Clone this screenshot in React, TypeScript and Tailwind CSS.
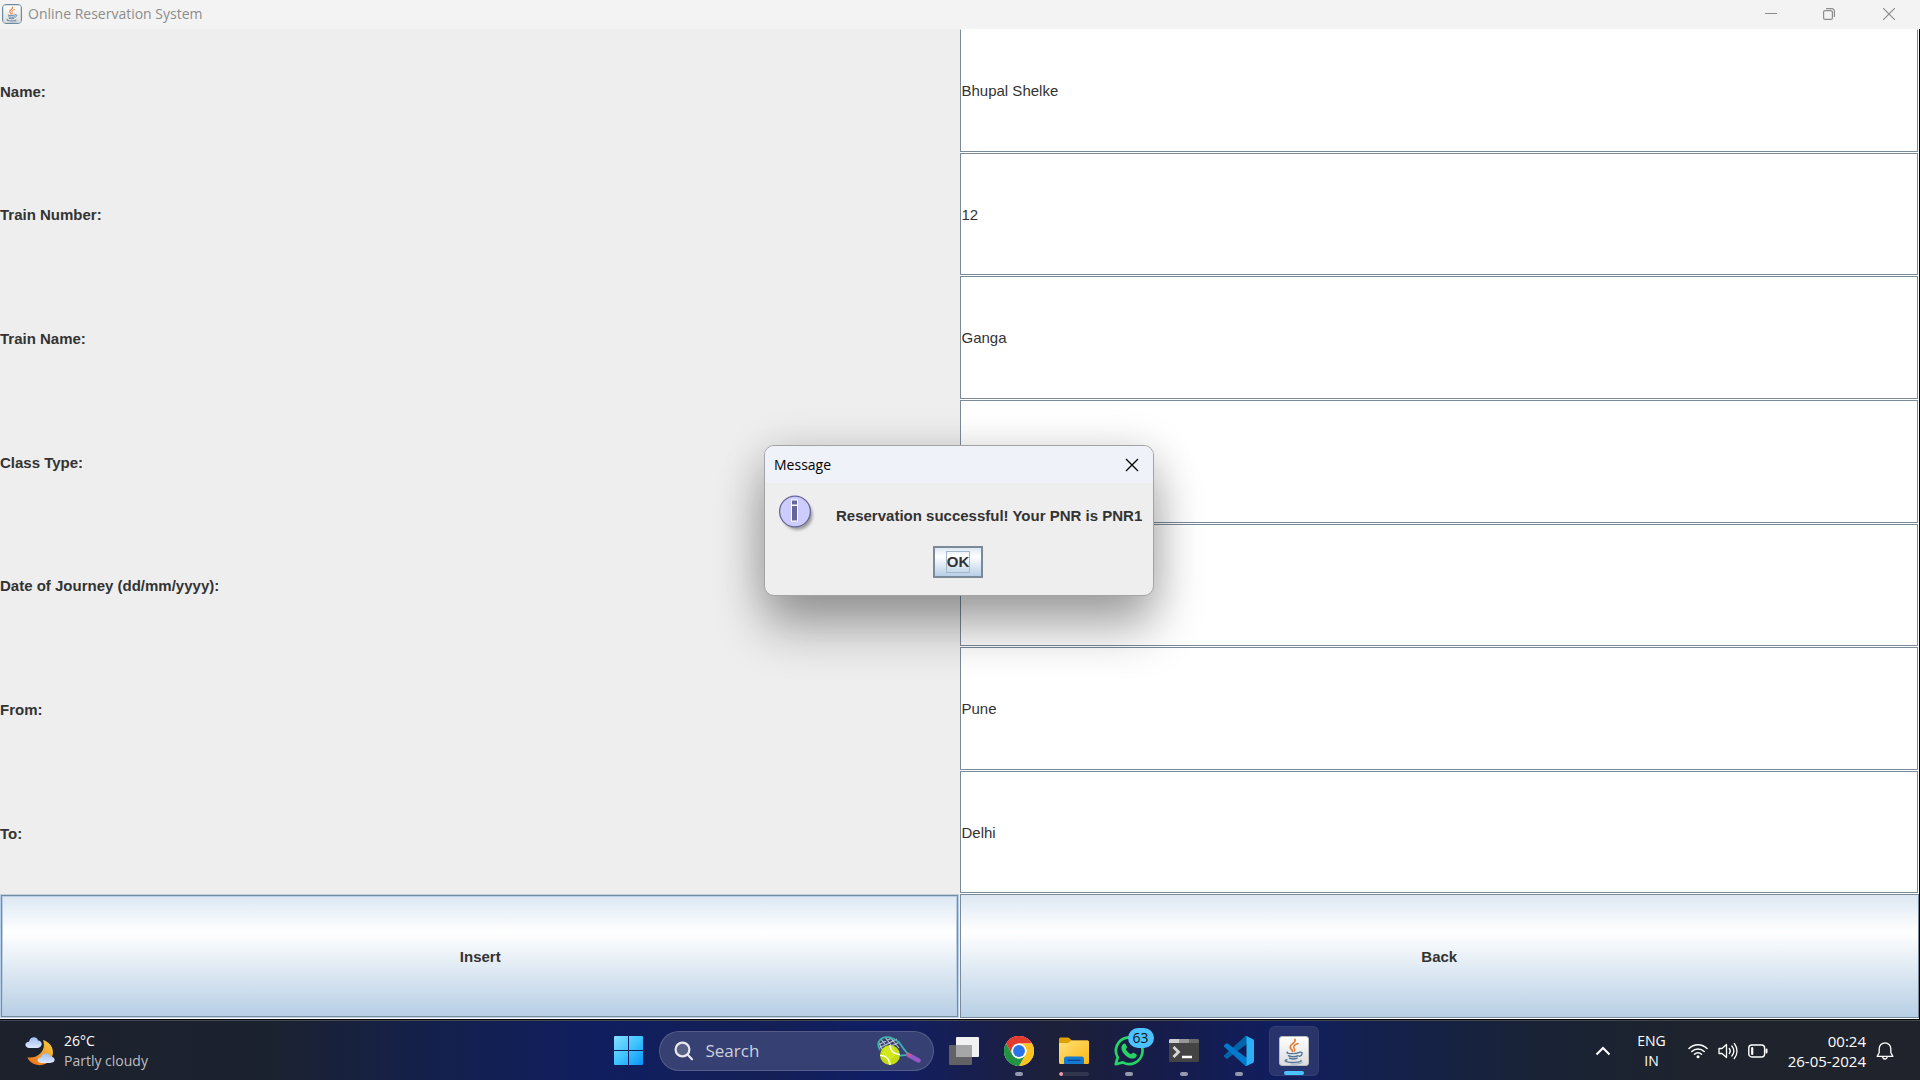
import type { ReactNode } from "react";

const rows = [
  { id: "name", label: "Name:", value: "Bhupal Shelke" },
  { id: "train-number", label: "Train Number:", value: "12" },
  { id: "train-name", label: "Train Name:", value: "Ganga" },
  { id: "class-type", label: "Class Type:", value: "" },
  { id: "journey-date", label: "Date of Journey (dd/mm/yyyy):", value: "" },
  { id: "from", label: "From:", value: "Pune" },
  { id: "to", label: "To:", value: "Delhi" },
];

function JavaIcon({ className }: { className: string }) {
  return (
    <svg viewBox="0 0 30 30" className={className} aria-hidden="true">
      <defs>
        <linearGradient id="java-bg" x1="0" y1="0" x2="0" y2="1">
          <stop offset="0" stopColor="#ffffff" />
          <stop offset="1" stopColor="#dcdcdc" />
        </linearGradient>
      </defs>
      <rect x="0.5" y="0.5" width="29" height="29" rx="2.5" fill="url(#java-bg)" stroke="#b9bcc0" />
      <g fill="none" strokeLinecap="round">
        <path d="M16 3.500c1.600 3-4.800 4.200-4.800 7.400 0 1.900 2 2.600 2.400 4.600" stroke="#e8762d" strokeWidth="1.700" />
        <path d="M19 7.500c-3 1-4.600 2.200-4.200 3.900.3 1.200 1.500 1.700.6 3.400" stroke="#e8762d" strokeWidth="1.400" />
        <path d="M8.500 16.200c-2 1 2 1.500 5.500 1.400 2.500 0 5-.4 6-.9" stroke="#56789a" strokeWidth="1.400" />
        <path d="M9.500 19.800c2.500 1 7 .9 9.500 0M10.500 22.300c2.200.8 5.400.8 7.600 0" stroke="#56789a" strokeWidth="1.500" />
        <path d="M20.500 16.300c3.800-.9 3.600 2.600-.3 4" stroke="#56789a" strokeWidth="1.400" />
        <path d="M8 23.800c-6 1.500 3 3 8 2.600 4-.3 7-1 6-2" stroke="#56789a" strokeWidth="1.400" />
        <path d="M12 28c4 .4 9 0 11.500-1.500" stroke="#8ea6bd" strokeWidth="0.900" />
      </g>
    </svg>
  );
}

function TitleBar() {
  return (
    <header className="flex h-[29px] shrink-0 items-center justify-between bg-[#f3f3f3] pb-px pl-0.5 text-[#8c8c8c]">
      <div className="flex items-center gap-1.5">
        <span className="rounded-sm border border-[#6d8aa5]">
          <JavaIcon className="size-[18px]" />
        </span>
        <h1 className="font-['Open_Sans',sans-serif] text-sm leading-5">Online Reservation System</h1>
      </div>
      <div className="flex h-full items-center">
        <button aria-label="Minimize" className="flex h-full w-[58px] items-center justify-center">
          <svg className="size-3" viewBox="0 0 12 12" stroke="currentColor"><path d="M0 5.500h12" /></svg>
        </button>
        <button aria-label="Restore" className="flex h-full w-[58px] items-center justify-center">
          <svg className="size-3" viewBox="0 0 12 12" fill="none" stroke="currentColor" strokeWidth="1.200">
            <rect x="0.600" y="2.600" width="8.800" height="8.800" rx="1.500" />
            <path d="M3 .6h6a2.400 2.400 0 0 1 2.400 2.400v6" />
          </svg>
        </button>
        <button aria-label="Close" className="flex h-full w-[62px] items-center justify-center">
          <svg className="size-3" viewBox="0 0 12 12" stroke="currentColor" strokeWidth="1.200"><path d="M0 0l12 12M12 0L0 12" /></svg>
        </button>
      </div>
    </header>
  );
}

function MessageDialog() {
  return (
    <section
      role="dialog"
      aria-labelledby="dialog-title"
      className="absolute top-[445px] left-[764px] w-[390px] overflow-hidden rounded-[10px] border border-[#a3a3a3] bg-[#eeeeee] shadow-[0_32px_50px_rgba(0,0,0,0.32),0_4px_44px_rgba(0,0,0,0.15)]"
    >
      <div className="flex h-[37px] items-center justify-between bg-[#f0f2f9] pr-3.5 pl-[9px]">
        <h2 id="dialog-title" className="font-['Open_Sans',sans-serif] text-sm leading-5 text-black">Message</h2>
        <button aria-label="Close message" className="text-black">
          <svg className="size-3.5" viewBox="0 0 14 14" stroke="currentColor" strokeWidth="1.300"><path d="M1 1l12 12M13 1L1 13" /></svg>
        </button>
      </div>
      <div className="flex h-[63px] items-start gap-[17px] pt-3 pl-3.5">
        <svg className="size-10 shrink-0" viewBox="0 0 40 40" aria-hidden="true">
          <defs>
            <filter id="info-shadow" x="-30%" y="-30%" width="160%" height="160%"><feGaussianBlur stdDeviation="1.800" /></filter>
          </defs>
          <circle cx="18.500" cy="20" r="15" fill="#888" opacity="0.800" filter="url(#info-shadow)" />
          <circle cx="16" cy="16.500" r="15.400" fill="#ccccff" stroke="#666699" strokeWidth="1.300" />
          <rect x="12.500" y="5" width="6" height="5" fill="#666699" stroke="#fff" />
          <rect x="12.500" y="10.500" width="6" height="15.500" fill="#666699" stroke="#fff" />
        </svg>
        <p className="pt-[11px] text-[15px] leading-5 font-bold whitespace-nowrap text-[#333333]">
          Reservation successful! Your PNR is PNR1
        </p>
      </div>
      <div className="flex justify-center pb-[17px]">
        <button className="mr-0.5 flex h-8 w-[50px] items-center justify-center border-2 border-[#7a8a99] bg-linear-to-b from-[#dde8f3] via-white via-30% to-[#b8cfe5] text-[15px] leading-5 font-bold text-[#333333]">
          <span className="border border-[#a3b8cc]">OK</span>
        </button>
      </div>
    </section>
  );
}

function Tile({ label, dot, active, children }: { label: string; dot?: ReactNode; active?: boolean; children: ReactNode }) {
  return (
    <button
      aria-label={label}
      className={
        active
          ? "relative flex h-[50px] w-[50px] items-center justify-center rounded-md border border-white/5 bg-white/10"
          : "relative flex h-[50px] w-[50px] items-center justify-center"
      }
    >
      {children}
      {dot}
    </button>
  );
}

const runningDot = <span className="absolute bottom-0 h-1 w-2 rounded-full bg-[#9499ad]" />;

function Taskbar() {
  return (
    <footer className="grid h-[60px] shrink-0 grid-cols-[1fr_auto_1fr] items-center border-t border-t-[#45484f] bg-[linear-gradient(90deg,#1c212c_0%,#1b222f_14%,#14204a_22%,#101e60_31%,#131f55_40%,#101e66_46%,#1a1f48_52%,#1c2038_55%,#161c4c_61%,#101e60_67%,#14214c_72%,#192336_80%,#1e232d_88%,#20232b_100%)] font-['Open_Sans',sans-serif] text-white">
      <button className="flex items-center gap-[9px] justify-self-start pl-[25px] text-left">
        <svg className="size-[30px]" viewBox="0 0 30 30" aria-hidden="true">
          <defs>
            <linearGradient id="moon" x1="0" y1="1" x2="1" y2="0"><stop offset="0" stopColor="#ee6c13" /><stop offset="1" stopColor="#f7cf45" /></linearGradient>
            <linearGradient id="cloud" x1="0" y1="0" x2="0" y2="1"><stop offset="0" stopColor="#9dbdf2" /><stop offset="1" stopColor="#dfe9ff" /></linearGradient>
          </defs>
          <path d="M18 4C26 6.500 30 14 27 21c-3 7-11 10-18 7-3.300-1.300-5.500-3.800-6.600-6.800C12 23 22 15 18 4z" fill="url(#moon)" />
          <path d="M4 12C-1 11-.5 6 4 5.800 5 0 12 0 13 4.500c5 .3 5 7-.5 7.500z" fill="url(#cloud)" />
          <path d="M16 27c-5-.5-4-5.500.2-5.800 1-5 8-5 9-.6 6 .3 6 6.400-.2 6.400z" fill="url(#cloud)" />
        </svg>
        <span className="flex flex-col text-sm leading-5">
          <span>26°C</span>
          <span className="text-[#bcbec2]">Partly cloudy</span>
        </span>
      </button>

      <nav aria-label="Taskbar" className="flex items-center gap-[5px] pl-0.5">
        <Tile label="Start">
          <svg className="size-[29px]" viewBox="0 0 29 29" aria-hidden="true">
            <defs>
              <linearGradient id="win" x1="0" y1="0" x2="1" y2="1"><stop offset="0" stopColor="#84dfff" /><stop offset="0.500" stopColor="#3fc4ff" /><stop offset="1" stopColor="#0a93f9" /></linearGradient>
            </defs>
            <path fill="url(#win)" d="M1 0h13v14H0V1a1 1 0 0 1 1-1zM15 0h13a1 1 0 0 1 1 1v13H15zM0 15h14v14H1a1 1 0 0 1-1-1zM15 15h14v13a1 1 0 0 1-1 1H15z" />
          </svg>
        </Tile>

        <label className="flex h-10 w-[275px] items-center rounded-full border border-white/15 bg-[#374072] pr-3 pl-3.5">
          <svg className="mr-3 size-5 shrink-0" viewBox="0 0 20 20" fill="none" stroke="#e8e9ee" strokeWidth="2.200" strokeLinecap="round" aria-hidden="true">
            <circle cx="8.500" cy="8.500" r="6.900" fill="#5a6187" /><path d="M13.700 13.700l4.300 4.500" />
          </svg>
          <input aria-label="Search" placeholder="Search" className="min-w-0 flex-1 bg-transparent text-[17px] leading-6 outline-none placeholder:text-[#cdd0dc]" />
          <svg className="h-[30px] w-11 shrink-0" viewBox="0 0 44 30" aria-hidden="true">
            <g fill="none">
              <path d="M3 8l12-6M2 12l18-9M5 14l18-8M4 3l8 11M8 1l9 12M13 1l9 11M2 7l4 8" stroke="#b9c1cf" strokeWidth="1.100" />
              <path d="M3 14C-2 5 5 0 13 1.500c6 1.500 10 5 13 10.500l6 7.500c-3-1-8 0-13 .5" stroke="#3fb3ae" strokeWidth="1.800" />
              <path d="M31.500 19l10 5.500" stroke="#9159c4" strokeWidth="4.500" strokeLinecap="round" />
              <path d="M30 17.500l4 2.200" stroke="#c05e8e" strokeWidth="3" />
            </g>
            <circle cx="13" cy="19" r="10" fill="#c4dd10" />
            <circle cx="12" cy="16.500" r="6.500" fill="#d8ec1c" opacity="0.700" />
            <path d="M3.200 19.500c5-.5 9.500 3.500 9.800 9.300M13 9.200c0 5 4 9.500 9.800 9.300" fill="none" stroke="#fff" strokeWidth="1.600" />
          </svg>
        </label>

        <Tile label="Task view">
          <svg className="h-7 w-[30px]" viewBox="0 0 30 28" aria-hidden="true">
            <rect y="8" width="23" height="20" rx="1" fill="#626265" />
            <rect x="7" width="23" height="20" rx="1" fill="#f1f1f3" />
            <path d="M7 8h16v12H7z" fill="#a6a6a8" />
          </svg>
        </Tile>

        <Tile label="Google Chrome" dot={runningDot}>
          <svg className="size-[30px]" viewBox="0 0 48 48" aria-hidden="true">
            <circle cx="24" cy="24" r="24" fill="#fff" />
            <path d="M3.200 12A24 24 0 0 1 44.800 12H24a12 12 0 0 0-10.400 18z" fill="#e33b2e" />
            <path d="M44.800 12A24 24 0 0 1 24 48l10.400-18A12 12 0 0 0 24 12z" fill="#fcc31e" />
            <path d="M24 48A24 24 0 0 1 3.200 12l10.400 18a12 12 0 0 0 20.800 0z" fill="#229342" />
            <circle cx="24" cy="24" r="12" fill="#fff" /><circle cx="24" cy="24" r="9.500" fill="#2a74e8" />
          </svg>
        </Tile>

        <Tile
          label="File Explorer"
          dot={
            <span className="absolute bottom-0 h-1 w-[30px] overflow-hidden rounded-full bg-white/10">
              <span className="block h-1 w-1 rounded-full bg-[#f79ba8]" />
            </span>
          }
        >
          <svg className="h-[27px] w-[30px]" viewBox="0 0 30 27" aria-hidden="true">
            <defs>
              <linearGradient id="folder" x1="0" y1="0" x2="1" y2="1"><stop offset="0" stopColor="#ffe07a" /><stop offset="1" stopColor="#fcb813" /></linearGradient>
            </defs>
            <path d="M0 2a1.500 1.500 0 0 1 1.500-1.500h8L13 3.500h15.500A1.500 1.500 0 0 1 30 5v5H0z" fill="#dfa000" />
            <path d="M0 6h9l3.500-2.500h16A1.500 1.500 0 0 1 30 5v20.500a1.500 1.500 0 0 1-1.500 1.500h-27A1.500 1.500 0 0 1 0 25.500z" fill="url(#folder)" />
            <path d="M5 27v-5a2.500 2.500 0 0 1 2.500-2.500h15A2.500 2.500 0 0 1 25 22v5z" fill="#1479cf" />
            <path d="M9 23.300h12" stroke="#0a4a91" strokeWidth="1.300" strokeLinecap="round" />
          </svg>
        </Tile>

        <Tile label="WhatsApp, 63 unread" dot={runningDot}>
          <svg className="size-[30px]" viewBox="0 0 30 30" aria-hidden="true">
            <path d="M1.800 28.200l1.900-6.800A13.300 13.300 0 1 1 8.800 26.400z" fill="none" stroke="#25d366" strokeWidth="2.700" strokeLinejoin="round" />
            <path d="M10 7.600c.6-.3 1.300-.2 1.600.5l1.300 2.900c.4 1-1.300 2-1 2.600 1.200 2.300 2.800 3.700 5 4.700.8.3 1.600-1.900 2.500-1.500l2.900 1.500c1.200.7-.2 4.300-3.400 4.300-5.500 0-11.600-6.200-11.500-10.700 0-2 1.200-3.700 2.600-4.300z" fill="#25d366" />
          </svg>
          <span className="absolute top-0.5 left-6 flex h-5 w-[26px] items-center justify-center rounded-full bg-[#4cc2ff] text-sm leading-4 text-[#11161c]">63</span>
        </Tile>

        <Tile label="Command Prompt" dot={runningDot}>
          <svg className="h-[23px] w-[30px]" viewBox="0 0 30 23" aria-hidden="true">
            <rect width="30" height="23" rx="1.500" fill="#444" />
            <path d="M1.500 0H10v4H0V1.500A1.500 1.500 0 0 1 1.500 0z" fill="#cfcfcf" />
            <path d="M10 0h10v4H10z" fill="#969696" /><path d="M20 0h8.500A1.500 1.500 0 0 1 30 1.500V4H20z" fill="#6b6b6b" />
            <path d="M4.500 8l5 5-5 5" fill="none" stroke="#d8d8d8" strokeWidth="2.800" />
            <path d="M13 18h10" stroke="#fff" strokeWidth="2.500" />
          </svg>
        </Tile>

        <Tile label="Visual Studio Code" dot={runningDot}>
          <svg className="size-[30px]" viewBox="0 0 100 100" aria-hidden="true">
            <path d="M96.500 10.800L75.900.9a6.200 6.200 0 0 0-7.100 1.200L1.300 63.600a4.200 4.200 0 0 0 0 6.200l5.500 5a4.200 4.200 0 0 0 5.300.2L93.400 13.300c2.700-2 6.600-.1 6.600 3.300v-.2c0-2.400-1.400-4.600-3.500-5.600z" fill="#0065a9" />
            <path d="M96.500 89.200l-20.600 9.900a6.200 6.200 0 0 1-7.100-1.200L1.300 36.400a4.200 4.200 0 0 1 0-6.200l5.500-5a4.200 4.200 0 0 1 5.300-.2l81.300 61.700c2.700 2 6.600.1 6.600-3.300v.2c0 2.400-1.400 4.600-3.500 5.600z" fill="#007acc" />
            <path d="M75.900 99.100a6.200 6.200 0 0 1-7.100-1.200c2.300 2.300 6.200.7 6.200-2.600V4.700c0-3.300-3.900-4.900-6.200-2.600A6.200 6.200 0 0 1 75.900.9l20.600 9.900c2.100 1 3.500 3.200 3.500 5.600v67.200c0 2.400-1.400 4.600-3.500 5.600z" fill="#2bb0f5" />
          </svg>
        </Tile>

        <Tile label="Java" active dot={<span className="absolute bottom-0 h-1 w-5 rounded-full bg-[#4cc2ff]" />}>
          <JavaIcon className="size-[30px]" />
        </Tile>
      </nav>

      <div className="flex items-center justify-self-end pr-[26px]">
        <button aria-label="Show hidden icons" className="mr-[26px]">
          <svg className="h-3.5 w-4" viewBox="0 0 16 14" fill="none" stroke="#fff" strokeWidth="2"><path d="M1.500 10.500L8 4l6.500 6.500" /></svg>
        </button>
        <button className="mr-[22px] flex flex-col items-center text-sm leading-5">
          <span>ENG</span>
          <span>IN</span>
        </button>
        <button aria-label="Network, volume and battery" className="mr-5 flex items-center gap-2.5">
          <svg className="size-5" viewBox="0 0 20 20" fill="none" stroke="#fff" strokeWidth="1.500" strokeLinecap="round">
            <path d="M1 7.500c5-5 13-5 18 0M3.800 10.500c3.400-3.400 9-3.400 12.400 0M6.500 13.300c2-2 5-2 7 0" /><circle cx="10" cy="15.800" r="1.500" fill="#fff" stroke="none" />
          </svg>
          <svg className="size-5" viewBox="0 0 20 20" fill="none" stroke="#fff" strokeWidth="1.300" strokeLinecap="round" strokeLinejoin="round">
            <path d="M1 7.500v5h3l4.500 4v-13L4 7.500zM11.300 7.500c1.200 1.500 1.200 3.500 0 5M13.800 5c2.500 3 2.500 7 0 10M16.300 2.500c3.600 4.500 3.600 10.500 0 15" />
          </svg>
          <svg className="size-5" viewBox="0 0 20 20" fill="none" stroke="#fff" strokeWidth="1.400">
            <rect x="0.800" y="4" width="15.800" height="12" rx="3" /><path d="M4.200 7v6" strokeWidth="2.200" strokeLinecap="round" /><path d="M18.500 8.500v3" strokeWidth="2" strokeLinecap="round" />
          </svg>
        </button>
        <button className="mr-2.5 flex flex-col items-end text-[15px] leading-5">
          <span>00:24</span>
          <span>26-05-2024</span>
        </button>
        <button aria-label="Notifications">
          <svg className="size-[18px]" viewBox="0 0 18 18" fill="none" stroke="#fff" strokeWidth="1.300" strokeLinejoin="round">
            <path d="M9 .8a5.800 5.800 0 0 0-5.800 5.800v3.900L1.200 14.400h15.600l-2-3.900V6.600A5.800 5.800 0 0 0 9 .8z" /><path d="M6.800 14.800a2.200 2.200 0 0 0 4.400 0" />
          </svg>
        </button>
      </div>
    </footer>
  );
}

export default function App() {
  return (
    <div className="relative flex min-h-screen flex-col bg-black font-['Liberation_Sans',Arial,sans-serif] text-[15px] text-[#333333]">
      <TitleBar />
      <main className="mr-px mb-px flex flex-1 flex-col bg-white">
        <form className="mb-px grid flex-1 auto-rows-fr grid-cols-2" onSubmit={(e) => e.preventDefault()}>
          {rows.map((row, i) => (
            <div key={row.id} className="col-span-2 grid grid-cols-subgrid">
              <label htmlFor={row.id} className="flex items-center bg-[#eeeeee] pt-0.5 leading-5 font-bold">
                {row.label}
              </label>
              <div className="flex pr-px pb-px">
                <input
                  id={row.id}
                  defaultValue={row.value}
                  className={
                    i === 0
                      ? "w-full border border-[#7a8a99] border-t-white bg-white px-px pt-0.5 outline-none"
                      : "w-full border border-[#7a8a99] bg-white px-px pt-0.5 outline-none"
                  }
                />
              </div>
            </div>
          ))}
          <div className="flex bg-[#eeeeee] pr-px">
            <button className="w-full border border-[#b8cfe5] bg-[#7a8a99] p-px font-bold">
              <span className="flex h-full items-center justify-center border border-[#b8cfe5] bg-linear-to-b from-[#dde8f3] via-white via-30% to-[#b8cfe5] pt-0.5 pl-0.5">
                Insert
              </span>
            </button>
          </div>
          <button className="border border-[#7a8a99] bg-linear-to-b from-[#dde8f3] via-white via-30% to-[#b8cfe5] pt-0.5 font-bold">
            Back
          </button>
        </form>
      </main>
      <Taskbar />
      <MessageDialog />
    </div>
  );
}
